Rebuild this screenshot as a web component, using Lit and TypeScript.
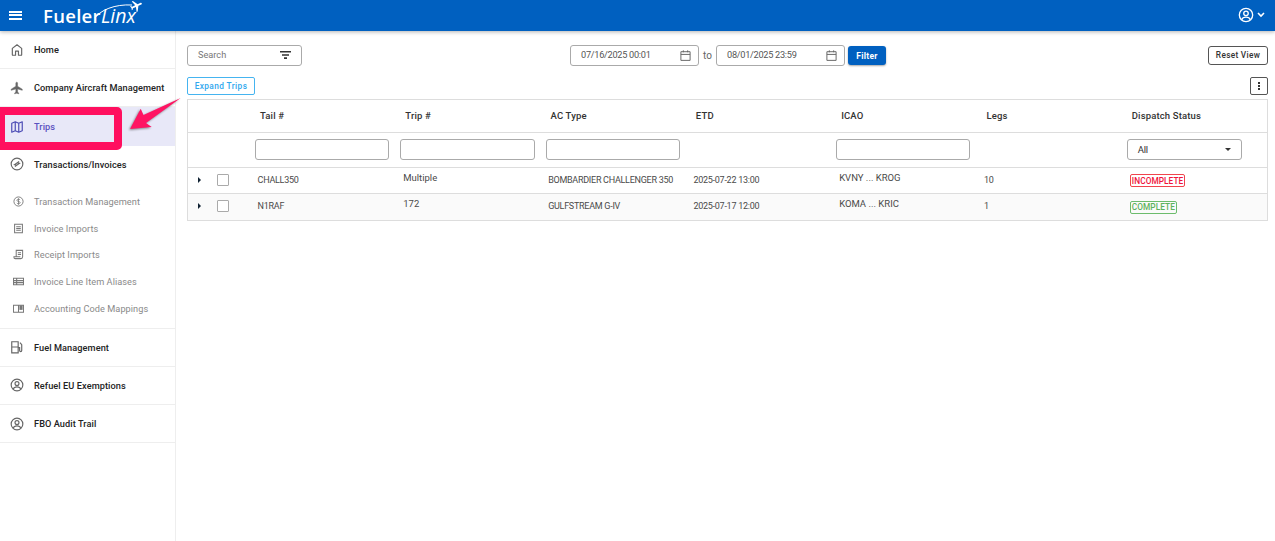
import { LitElement, css, html, svg } from 'lit';
import { customElement } from 'lit/decorators.js';

const PLANE = 'M21 16v-2l-8-5V3.500c0-.83-.67-1.500-1.500-1.500S10 2.670 10 3.500V9l-8 5v2l8-2.500V19l-2 1.500V22l3.500-1 3.500 1v-1.500L13 19v-5.500l8 2.500z';

const ICONS = {
  home: svg`<path d="M4 9.200 12 3l8 6.200V20a1 1 0 0 1-1 1h-4.500v-7h-5v7H5a1 1 0 0 1-1-1z" fill="none" stroke="currentColor" stroke-width="2" stroke-linejoin="round"/>`,
  plane: svg`<path d="${PLANE}" fill="currentColor" stroke="currentColor" stroke-width=".8"/>`,
  map: svg`<path d="M3 5.500 9 3l6 2.500L21 3v15.500L15 21l-6-2.500L3 21zM9 3v15.500M15 5.500V21" fill="none" stroke="currentColor" stroke-width="2" stroke-linejoin="round"/>`,
  swap: svg`<circle cx="12" cy="12" r="10" fill="none" stroke="currentColor" stroke-width="2"/><path d="M6.500 13.500h9.500l-2.500-2.500M17.500 10.500H8l2.500 2.500" fill="none" stroke="currentColor" stroke-width="2" transform="rotate(-35 12 12)"/>`,
  dollar: svg`<circle cx="12" cy="12" r="10" fill="none" stroke="currentColor" stroke-width="2"/><path d="M15.500 8.800C15 7.600 13.700 7 12 7c-2 0-3.500 1-3.500 2.500 0 3.400 7.200 1.600 7.200 5 0 1.500-1.600 2.500-3.700 2.500-1.700 0-3.100-.7-3.700-2M12 5v14" fill="none" stroke="currentColor" stroke-width="1.800"/>`,
  list: svg`<path d="M3.500 2.500h17v19h-17zM7 8h10M7 12h10M7 16h10" fill="none" stroke="currentColor" stroke-width="2.200"/>`,
  receipt: svg`<path d="M7 17V3h14v14a4 4 0 0 1-4 4H5a3 3 0 0 1-3-3v-1h13v1M10.500 8h7M10.500 12h7" fill="none" stroke="currentColor" stroke-width="2.200"/>`,
  rows: svg`<path d="M1 5h22v14H1zM1 10h22M1 14.500h22M8 5v14" fill="none" stroke="currentColor" stroke-width="2.400"/>`,
  book: svg`<path d="M12 5H1v15h11zM12 5h11v15H12" fill="none" stroke="currentColor" stroke-width="2.200"/><path d="M14 5h7v10h-7z" fill="currentColor"/>`,
  fuel: svg`<path d="M3 22V3h11v19zM3 12h11M14 13h2.500v5a1.800 1.800 0 0 0 3.600 0V8l-3-3.500" fill="none" stroke="currentColor" stroke-width="2"/>`,
  user: svg`<circle cx="12" cy="12" r="10" fill="none" stroke="currentColor" stroke-width="2"/><circle cx="12" cy="9.500" r="3.400" fill="none" stroke="currentColor" stroke-width="2"/><path d="M5.500 19c1-2.800 3.500-3.800 6.500-3.800s5.500 1 6.500 3.800" fill="none" stroke="currentColor" stroke-width="2"/>`,
  calendar: svg`<path d="M3.500 5h17v16h-17zM3.500 10h17M8 2.500V6M16 2.500V6" fill="none" stroke="currentColor" stroke-width="1.800"/>`,
};
type IconName = keyof typeof ICONS;

const icon = (name: IconName) => html`<svg class="icon" viewBox="0 0 24 24">${ICONS[name]}</svg>`;

const SUB_ITEMS: { label: string; icon: IconName }[] = [
  { label: 'Transaction Management', icon: 'dollar' },
  { label: 'Invoice Imports', icon: 'list' },
  { label: 'Receipt Imports', icon: 'receipt' },
  { label: 'Invoice Line Item Aliases', icon: 'rows' },
  { label: 'Accounting Code Mappings', icon: 'book' },
];

const COLUMNS = ['Tail #', 'Trip #', 'AC Type', 'ETD', 'ICAO', 'Legs', 'Dispatch Status'];

const TRIPS = [
  { tail: 'CHALL350', trip: 'Multiple', type: 'BOMBARDIER CHALLENGER 350', etd: '2025-07-22 13:00', from: 'KVNY', to: 'KROG', legs: '10', status: 'INCOMPLETE' },
  { tail: 'N1RAF', trip: '172', type: 'GULFSTREAM G-IV', etd: '2025-07-17 12:00', from: 'KOMA', to: 'KRIC', legs: '1', status: 'COMPLETE' },
];

@customElement('app-root')
export class AppRoot extends LitElement {
  static styles = css`
    :host {
      display: block;
      position: relative;
      height: 541px;
      overflow: hidden;
      background: #fff;
      font-family: Roboto, "Liberation Sans", sans-serif;
      font-size: 9.5px;
      color: #333;
    }
    * { box-sizing: border-box; }
    .icon { display: block; width: 100%; height: 100%; }

    header {
      position: relative;
      z-index: 2;
      height: 31px;
      background: #0060c0;
      color: #fff;
      display: flex;
      align-items: center;
      padding: 0 10px 0 9px;
      box-shadow: 0 1px 4px rgba(0, 0, 0, .3);
    }
    .burger { width: 13px; height: 9px; border-top: 2px solid #fff; border-bottom: 2px solid #fff; position: relative; margin-top: -1px; }
    .burger::after { content: ''; position: absolute; left: 0; right: 0; top: 1.500px; height: 2px; background: #fff; }
    .logo { position: relative; margin-left: 21px; width: 102px; height: 31px; line-height: 31px; font-family: "Open Sans", sans-serif; font-size: 18.500px; font-weight: 600; letter-spacing: .3px; white-space: nowrap; }
    .logo i { font-weight: 400; font-size: 19.500px; letter-spacing: 0; }
    .logo svg { position: absolute; left: 48px; top: 0; width: 56px; height: 18px; }
    .account { margin-left: auto; display: flex; align-items: center; gap: 3px; margin-top: -1px; }
    .account .user { width: 16px; height: 16px; }
    .account svg.chev { width: 8px; height: 6px; }

    .body { display: flex; height: 510px; }
    nav { width: 176px; flex: none; border-right: 1px solid #eee; }
    .item {
      display: flex;
      align-items: center;
      height: 38px;
      padding-left: 10px;
      font-size: 9.200px;
      font-weight: 500;
      color: #222;
      letter-spacing: .07px;
      border-bottom: 1px solid #eee;
    }
    .item.plain { border-bottom: 0; height: 36px; }
    .item.low { padding-top: 1px; }
    .item .ic { width: 14px; height: 14px; margin-right: 10px; color: #666; flex: none; }
    .item.active { height: 39px; background: #e8e8f8; color: #5a50c0; border-bottom: 0; }
    .item.active .ic { color: #4b4bb5; }
    .subs { padding: 6px 0 6px; border-bottom: 1px solid #eee; }
    .sub { display: flex; align-items: center; height: 26.800px; padding-left: 13px; font-size: 9.200px; color: #8a8a8a; letter-spacing: .06px; }
    .sub .ic { width: 11px; height: 11px; margin-right: 10px; color: #777; flex: none; }

    main { flex: 1; padding: 14px 7px 0 11px; min-width: 0; }
    .toolbar { display: flex; align-items: center; position: relative; height: 21px; }
    .field { height: 21px; border: 1px solid #aaa; border-radius: 3px; display: flex; align-items: center; color: #555; background: #fff; }
    .search { width: 115px; padding: 0 10px 2px 10px; justify-content: space-between; color: #777; font-size: 9.200px; }
    .filter-ic { width: 11px; height: 8px; }
    .dates { position: absolute; left: 383px; display: flex; align-items: center; }
    .date { width: 129px; padding: 0 6px 2px 10px; justify-content: space-between; font-size: 9.200px; letter-spacing: -.28px; }
    .date .cal { width: 13px; height: 13px; color: #666; margin-top: 1px; }
    .to { width: 17px; text-align: center; font-size: 10px; color: #666; padding-bottom: 1px; }
    .btn-filter { margin-left: 3px; width: 38px; height: 19px; background: #0060c0; color: #fff; font-weight: 700; border-radius: 3px; display: flex; align-items: center; justify-content: center; font-size: 8.500px; letter-spacing: .3px; box-shadow: 0 1px 2px rgba(0, 0, 0, .35); }
    .btn-reset { margin-left: auto; width: 60px; height: 19px; padding-bottom: 1px; border: 1px solid #555; border-radius: 3px; display: flex; align-items: center; justify-content: center; font-size: 8.300px; font-weight: 500; letter-spacing: .3px; }
    .actions { display: flex; justify-content: space-between; align-items: center; margin-top: 11px; height: 18px; }
    .btn-expand { width: 68px; height: 18px; border: 1px solid #45b4f0; border-radius: 2px; color: #30a8ee; font-weight: 500; font-size: 8.300px; letter-spacing: .4px; display: flex; align-items: center; justify-content: center; }
    .btn-more { width: 18px; height: 18px; border: 1px solid #555; border-radius: 2px; display: flex; flex-direction: column; gap: 1px; align-items: center; justify-content: center; }
    .btn-more span { width: 2px; height: 2px; background: #333; }

    .table { margin-top: 4px; border: 1px solid #ddd; display: grid; grid-template-columns: 62px repeat(7, 1fr); }
    .cell { display: flex; align-items: center; border-bottom: 1px solid #ddd; min-width: 0; }
    .head { height: 33px; padding: 0 0 1px 10px; font-weight: 500; color: #333; letter-spacing: .15px; display: flex; align-items: center; border-bottom: 1px solid #ddd; }
    .filt { height: 35px; padding: 0 6px 1px 5px; display: flex; align-items: center; border-bottom: 1px solid #ddd; }
    .filt .box { width: 100%; height: 21px; border: 1px solid #aaa; border-radius: 3px; background: #fff; }
    .select { width: 115px; height: 21px; flex: none; border: 1px solid #aaa; border-radius: 3px; display: flex; align-items: center; justify-content: space-between; padding: 0 10px; color: #333; letter-spacing: -.2px; }
    .select::after { content: ''; border: 3px solid transparent; border-top-color: #333; border-bottom: 0; }
    .d { height: 26px; padding: 0 0 2px 7.600px; white-space: nowrap; color: #4a4a4a; font-size: 9px; letter-spacing: -.27px; }
    .d.up { align-items: flex-start; padding: 3.500px 0 0 8px; font-size: 9.500px; letter-spacing: 0; }
    .d.odd { background: #fafafa; border-bottom: 0; }
    .ctrl { padding-left: 0; }
    .caret { margin-left: 10px; width: 0; height: 0; border: 3px solid transparent; border-left: 3px solid #123; border-right: 0; }
    .check { margin-left: 16px; width: 12px; height: 12px; border: 1px solid #aaa; border-radius: 1px; background: #fff; }
    .tag { border: 1px solid; border-radius: 2px; height: 13px; margin: 2px 0 0 .5px; padding: 0 1px; display: inline-flex; align-items: center; font-size: 8.300px; font-weight: 500; letter-spacing: .06px; }
    .tag.bad { color: #f0143c; border-color: #f0444c; }
    .tag.ok { color: #5cb25c; border-color: #6cbc6c; }

    .callout { position: absolute; left: 0; top: 107px; width: 122px; height: 43px; border: solid #ff0f5f; border-width: 8px 8px 8px 5px; border-radius: 0 5px 5px 0; }
    .arrow { position: absolute; left: 125px; top: 94px; width: 60px; height: 40px; overflow: visible; filter: drop-shadow(-1px 1.500px 1px rgba(0, 0, 0, .45)); }
  `;

  renderNavItem(label: string, name: IconName, cls = '') {
    return html`<div class="item ${cls}"><span class="ic">${icon(name)}</span>${label}</div>`;
  }

  render() {
    return html`
      <header>
        <div class="burger"></div>
        <div class="logo">
          Fueler<i>Linx</i>
          <svg viewBox="0 0 56 18">
            <path d="M3 19C9 10 24 4 41 5" fill="none" stroke="#fff" stroke-width="1"/>
            <path d="${PLANE}" fill="#fff" transform="translate(45.500 6) rotate(65) scale(.6) translate(-12 -12)"/>
          </svg>
        </div>
        <div class="account">
          <span class="user">${icon('user')}</span>
          <svg class="chev" viewBox="0 0 8 6"><path d="M1 1l3 3 3-3" fill="none" stroke="#fff" stroke-width="1.600"/></svg>
        </div>
      </header>
      <div class="body">
        <nav>
          ${this.renderNavItem('Home', 'home')}
          ${this.renderNavItem('Company Aircraft Management', 'plane')}
          ${this.renderNavItem('Trips', 'map', 'active')}
          ${this.renderNavItem('Transactions/Invoices', 'swap', 'plain')}
          <div class="subs">
            ${SUB_ITEMS.map(s => html`<div class="sub"><span class="ic">${icon(s.icon)}</span>${s.label}</div>`)}
          </div>
          ${this.renderNavItem('Fuel Management', 'fuel')}
          ${this.renderNavItem('Refuel EU Exemptions', 'user')}
          ${this.renderNavItem('FBO Audit Trail', 'user', 'low')}
        </nav>
        <main>
          <div class="toolbar">
            <div class="field search">
              Search
              <svg class="filter-ic" viewBox="0 0 11 8"><path d="M0 0h11v1.500H0zM2 3.200h7v1.500H2zM4 6.300h3V8H4z" fill="#333"/></svg>
            </div>
            <div class="dates">
              <div class="field date">07/16/2025 00:01<span class="cal">${icon('calendar')}</span></div>
              <span class="to">to</span>
              <div class="field date">08/01/2025 23:59<span class="cal">${icon('calendar')}</span></div>
              <div class="btn-filter">Filter</div>
            </div>
            <div class="btn-reset">Reset View</div>
          </div>
          <div class="actions">
            <div class="btn-expand">Expand Trips</div>
            <div class="btn-more"><span></span><span></span><span></span></div>
          </div>
          <div class="table">
            <div class="head"></div>
            ${COLUMNS.map(c => html`<div class="head">${c}</div>`)}
            <div class="filt"></div>
            <div class="filt"><div class="box"></div></div>
            <div class="filt"><div class="box"></div></div>
            <div class="filt"><div class="box"></div></div>
            <div class="filt"></div>
            <div class="filt"><div class="box"></div></div>
            <div class="filt"></div>
            <div class="filt"><div class="select">All</div></div>
            ${TRIPS.map((t, i) => {
              const rowCls = i % 2 ? 'odd' : '';
              return html`
                <div class="cell d ctrl ${rowCls}"><span class="caret"></span><span class="check"></span></div>
                <div class="cell d ${rowCls}">${t.tail}</div>
                <div class="cell d up ${rowCls}">${t.trip}</div>
                <div class="cell d ${rowCls}">${t.type}</div>
                <div class="cell d ${rowCls}">${t.etd}</div>
                <div class="cell d up ${rowCls}">${t.from} ... ${t.to}</div>
                <div class="cell d ${rowCls}">${t.legs}</div>
                <div class="cell d ${rowCls}"><span class="tag ${t.status === 'COMPLETE' ? 'ok' : 'bad'}">${t.status}</span></div>
              `;
            })}
          </div>
        </main>
      </div>
      <div class="callout"></div>
      <svg class="arrow" viewBox="0 0 60 40">
        <path d="M55.700 4 18.500 21 15.700 14.700 5 35 26.700 33 21 29z" fill="#ff1463"/>
      </svg>
    `;
  }
}
